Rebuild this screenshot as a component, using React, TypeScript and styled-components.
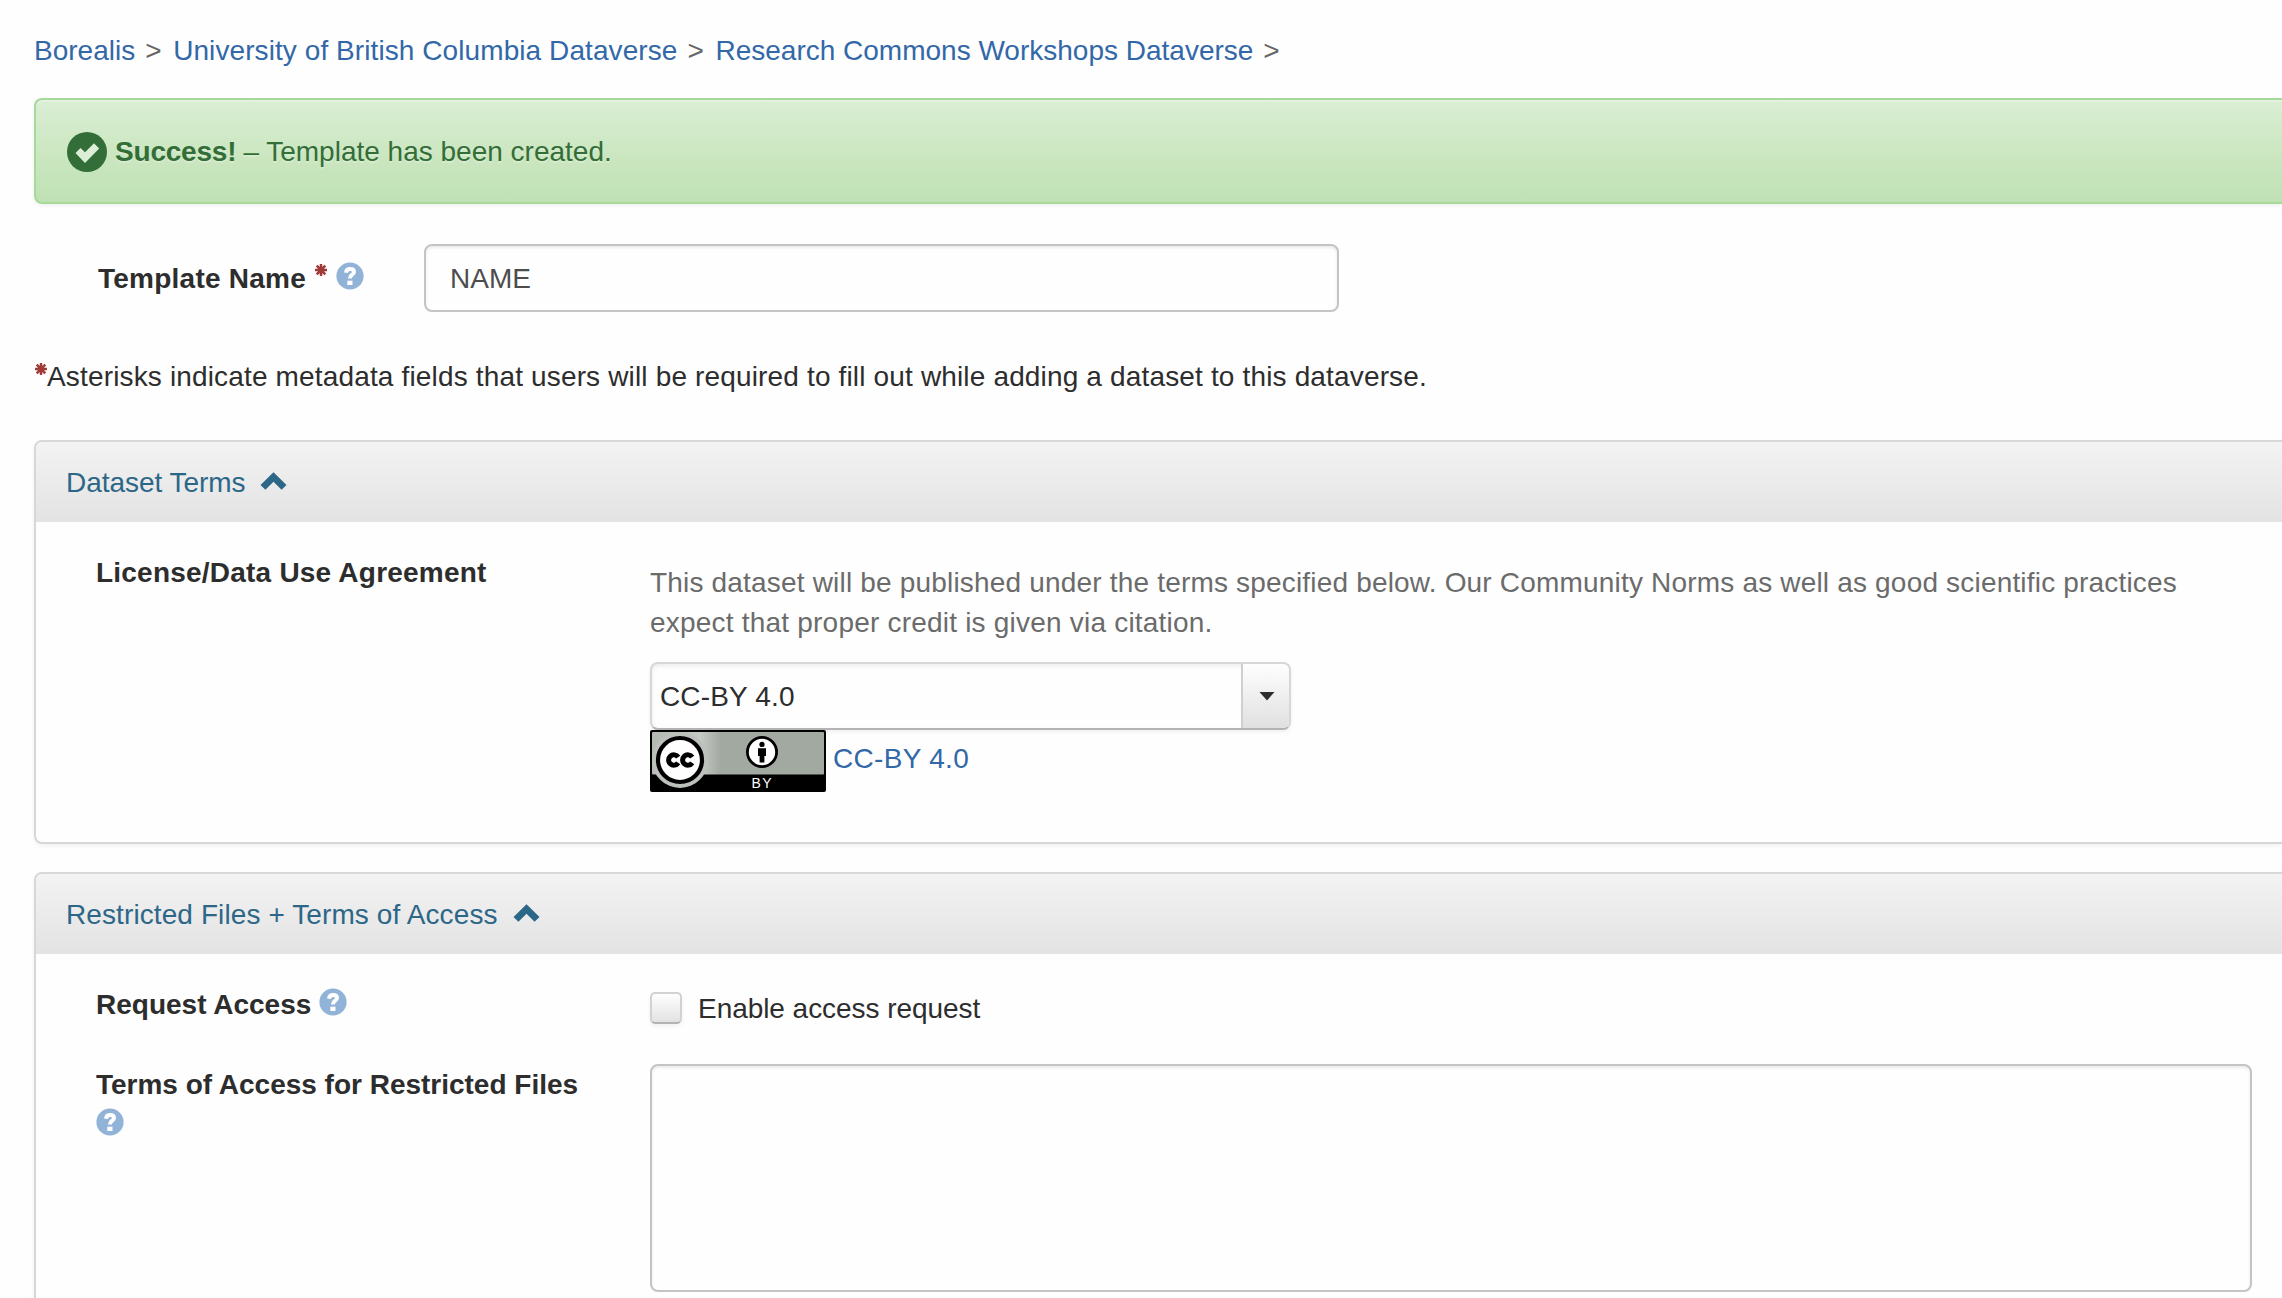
import React from 'react';
import styled, { createGlobalStyle } from 'styled-components';

const Global = createGlobalStyle`
  *, *::before, *::after { box-sizing: border-box; }
  body {
    margin: 0;
    background: #fefefe;
    color: #2d2d2d;
    font: 28px/40px "Liberation Sans", Arial, sans-serif;
    overflow: hidden;
  }
`;

const Page = styled.main`
  height: 1298px;
  padding: 31px 0 0 34px;
  overflow: hidden;
`;

const Text = styled.span<{ $track?: number }>`
  letter-spacing: ${p => p.$track ?? 0}px;
  white-space: nowrap;
`;

const Breadcrumb = styled.nav`
  display: flex;
  height: 40px;
`;

const Link = styled.a<{ $track?: number }>`
  color: #3268a8;
  text-decoration: none;
  white-space: nowrap;
  letter-spacing: ${p => p.$track ?? 0}px;
`;

const Separator = styled.span`
  width: 38px;
  padding-left: 10px;
  color: #666;
`;

const Alert = styled.section`
  display: flex;
  align-items: center;
  height: 106px;
  margin-top: 27px;
  padding: 2px 0 0 31px;
  border: 2px solid #a7d99b;
  border-right: 0;
  border-radius: 8px 0 0 8px;
  background: linear-gradient(#daeed4, #cae6bf 58%, #bfe1b4);
  box-shadow: inset 0 2px 0 rgba(255, 255, 255, 0.28), 0 2px 4px rgba(0, 0, 0, 0.06);
  color: #336e38;
  text-shadow: 0 2px 0 rgba(255, 255, 255, 0.25);
`;

const AlertTitle = styled.strong`
  margin: 0 7px 0 8px;
  letter-spacing: -0.2px;
`;

const NameRow = styled.div`
  display: flex;
  align-items: center;
  height: 68px;
  margin-top: 40px;
`;

const NameLabel = styled.label`
  display: flex;
  width: 390px;
  padding: 2px 0 0 64px;
  font-weight: 700;
`;

const NameInput = styled.input`
  width: 915px;
  height: 68px;
  padding: 2px 24px 0;
  border: 2px solid #c4c4c4;
  border-radius: 8px;
  background: #fefefe;
  box-shadow: inset 0 2px 3px rgba(0, 0, 0, 0.08);
  color: #4d4d4d;
  font: inherit;
`;

const Note = styled.p`
  display: flex;
  height: 40px;
  margin: 45px 0 0;
`;

const Panel = styled.section<{ $top: number; $height?: number }>`
  height: ${p => (p.$height ? `${p.$height}px` : '480px')};
  margin-top: ${p => p.$top}px;
  border: 2px solid #d7d7d7;
  border-right: 0;
  border-radius: 8px 0 0 8px;
  box-shadow: 0 2px 4px rgba(0, 0, 0, 0.06);
`;

const PanelHeader = styled.header`
  display: flex;
  align-items: center;
  gap: 15px;
  height: 80px;
  padding: 2px 0 0 30px;
  border-radius: 6px 0 0 0;
  background: linear-gradient(#f3f3f3, #e3e3e3);
  color: #2d6788;
`;

const PanelBody = styled.div`
  display: grid;
  grid-template-columns: 554px 1602px;
  padding: 31px 0 0 60px;
`;

const FieldLabel = styled.div`
  display: flex;
  flex-wrap: wrap;
  align-content: flex-start;
  padding-right: 54px;
  font-weight: 700;
`;

const LicenseField = styled.div`
  padding-top: 10px;
`;

const HelpText = styled.p`
  display: flex;
  flex-direction: column;
  margin: 0 0 19px;
  color: #6b6b6b;
`;

const Select = styled.div`
  display: flex;
  justify-content: space-between;
  width: 641px;
  height: 68px;
  border: 2px solid #d7d7d7;
  border-bottom-color: #b3b3b3;
  border-radius: 8px;
  background: #fefefe;
  box-shadow: inset 0 2px 4px rgba(0, 0, 0, 0.08), 0 2px 4px rgba(0, 0, 0, 0.06);
`;

const SelectValue = styled.span`
  padding: 13px 0 0 8px;
  letter-spacing: 0.15px;
`;

const SelectTrigger = styled.span`
  display: flex;
  align-items: center;
  justify-content: center;
  width: 48px;
  padding-left: 1px;
  border-left: 2px solid #cfcfcf;
  border-radius: 0 6px 6px 0;
  background: linear-gradient(#fefefe, #e0e0e0);
`;

const LicenseLine = styled.div`
  display: flex;
  height: 62px;
  gap: 7px;

  svg {
    flex: none;
  }

  a {
    padding-top: 9px;
  }
`;

const CheckRow = styled.label`
  display: flex;
  align-items: center;
  gap: 16px;
  height: 40px;
  margin-top: 4px;
`;

const Checkbox = styled.span`
  width: 32px;
  height: 32px;
  margin-bottom: 2px;
  border: 2px solid #d2d2d2;
  border-bottom-color: #b3b3b3;
  border-radius: 5px;
  background: linear-gradient(#fefefe, #e2e2e2);
  box-shadow: 0 2px 4px rgba(0, 0, 0, 0.06);
`;

const TermsLabel = styled(FieldLabel)`
  padding-top: 36px;
`;

const TextArea = styled.textarea`
  display: block;
  width: 1602px;
  height: 228px;
  margin-top: 35px;
  border: 2px solid #c4c4c4;
  border-radius: 8px;
  background: #fefefe;
  box-shadow: inset 0 2px 3px rgba(0, 0, 0, 0.08);
  resize: none;
`;

const HelpSvg = styled.svg<{ $left?: number; $top?: number }>`
  margin: ${p => p.$top ?? 3}px 0 0 ${p => p.$left ?? 0}px;
`;

const AsteriskSvg = styled.svg<{ $left: number; $top: number }>`
  flex: none;
  margin: ${p => p.$top}px 0 0 ${p => p.$left}px;
`;

const ChevronSvg = styled.svg`
  margin-bottom: 4px;
`;

const Help = ({ left, top }: { left?: number; top?: number }) => (
  <HelpSvg $left={left} $top={top} width="28" height="28" viewBox="0 0 28 28">
    <circle cx="14" cy="14" r="13.6" fill="#92b3d8" />
    <path d="M10 10.700c.3-2.600 1.900-3.700 4.100-3.700 2.400 0 3.900 1.200 3.900 3 0 2.900-4.100 2.600-4.100 6.400" fill="none" stroke="#fefefe" strokeWidth="4" />
    <rect x="11.300" y="18.700" width="5.200" height="4.300" fill="#fefefe" />
  </HelpSvg>
);

const Asterisk = ({ left, top }: { left: number; top: number }) => (
  <AsteriskSvg $left={left} $top={top} width="12" height="12" viewBox="0 0 12 12">
    <path d="M6 0v12M0 6h12M1.700 1.700l8.600 8.600M10.300 1.700l-8.600 8.600" stroke="#a03a38" strokeWidth="2.500" />
  </AsteriskSvg>
);

const Chevron = () => (
  <ChevronSvg width="27" height="18" viewBox="0 0 27 18">
    <path d="M13.500.300 26.500 13l-4.900 4.800-8.100-8-8.100 8L.500 13z" fill="#2d6788" />
  </ChevronSvg>
);

const CheckCircle = () => (
  <svg width="40" height="40" viewBox="0 0 40 40">
    <circle cx="20" cy="20" r="20" fill="#336e38" />
    <path d="M8.500 21l5-5 4.500 4.300 9-9.100 5.200 5.200L18 31z" fill="#dcefd6" />
  </svg>
);

const LicenseBadge = () => (
  <svg width="176" height="62" viewBox="0 0 88 31">
    <defs>
      <linearGradient id="sheen" x1="0" x2="1">
        <stop offset="0" stopColor="#b4bab3" />
        <stop offset=".28" stopColor="#c6cac5" />
        <stop offset=".4" stopColor="#a1a9a0" />
      </linearGradient>
      <clipPath id="plate">
        <rect width="88" height="31" rx="1" />
      </clipPath>
    </defs>
    <g clipPath="url(#plate)">
      <rect width="88" height="31" fill="#000" />
      <rect x="1" y="1" width="86" height="21.200" rx=".5" fill="url(#sheen)" />
      <circle cx="15" cy="15" r="14" fill="#bcc1bb" />
      <circle cx="15" cy="15" r="11" fill="#fefefe" stroke="#000" strokeWidth="2.100" />
      <g fill="none" stroke="#000" strokeWidth="2.500">
        <path d="M14.100 13.600a2.600 2.600 0 1 0 0 2.800" />
        <path d="M21.100 13.600a2.600 2.600 0 1 0 0 2.800" />
      </g>
      <circle cx="56" cy="11" r="7.300" fill="#fefefe" stroke="#000" strokeWidth="1.400" />
      <circle cx="56" cy="7.200" r="1.300" fill="#000" />
      <path d="M54 9.100h4v3.900h-.8v3.300h-2.400V13H54z" fill="#000" />
      <text x="50.700" y="29" fill="#fefefe" fontFamily="Liberation Sans, sans-serif" fontSize="7" letterSpacing=".8">BY</text>
    </g>
  </svg>
);

export default function App() {
  return (
    <Page>
      <Global />
      <Breadcrumb>
        <Link>Borealis</Link>
        <Separator>&gt;</Separator>
        <Link $track={0.08}>University of British Columbia Dataverse</Link>
        <Separator>&gt;</Separator>
        <Link>Research Commons Workshops Dataverse</Link>
        <Separator>&gt;</Separator>
      </Breadcrumb>

      <Alert>
        <CheckCircle />
        <AlertTitle>Success!</AlertTitle>
        <Text>– Template has been created.</Text>
      </Alert>

      <NameRow>
        <NameLabel>
          <Text $track={0.24}>Template Name</Text>
          <Asterisk left={9} top={5} />
          <Help left={9} top={3} />
        </NameLabel>
        <NameInput defaultValue="NAME" />
      </NameRow>

      <Note>
        <Asterisk left={1} top={6} />
        <Text $track={0.156}>
          Asterisks indicate metadata fields that users will be required to fill out while adding a dataset to this dataverse.
        </Text>
      </Note>

      <Panel $top={43} $height={404}>
        <PanelHeader>
          <Text $track={-0.04}>Dataset Terms</Text>
          <Chevron />
        </PanelHeader>
        <PanelBody>
          <FieldLabel>
            <Text $track={0.22}>License/Data Use Agreement</Text>
          </FieldLabel>
          <LicenseField>
            <HelpText>
              <Text $track={0.184}>
                This dataset will be published under the terms specified below. Our Community Norms as well as good scientific practices
              </Text>
              <Text $track={0.21}>expect that proper credit is given via citation.</Text>
            </HelpText>
            <Select>
              <SelectValue>CC-BY 4.0</SelectValue>
              <SelectTrigger>
                <svg width="16" height="9" viewBox="0 0 16 9">
                  <path d="M.500 0h15L8 8.500z" fill="#2d2d2d" />
                </svg>
              </SelectTrigger>
            </Select>
            <LicenseLine>
              <LicenseBadge />
              <Link $track={0.3}>CC-BY 4.0</Link>
            </LicenseLine>
          </LicenseField>
        </PanelBody>
      </Panel>

      <Panel $top={28}>
        <PanelHeader>
          <Text $track={0.1}>Restricted Files + Terms of Access</Text>
          <Chevron />
        </PanelHeader>
        <PanelBody>
          <FieldLabel>
            <Text>Request Access</Text>
            <Help left={8} top={3} />
          </FieldLabel>
          <CheckRow>
            <Checkbox />
            <Text $track={-0.05}>Enable access request</Text>
          </CheckRow>
          <TermsLabel>
            <Text $track={-0.01}>Terms of Access for Restricted Files</Text>
            <Help top={3} />
          </TermsLabel>
          <TextArea />
        </PanelBody>
      </Panel>
    </Page>
  );
}
